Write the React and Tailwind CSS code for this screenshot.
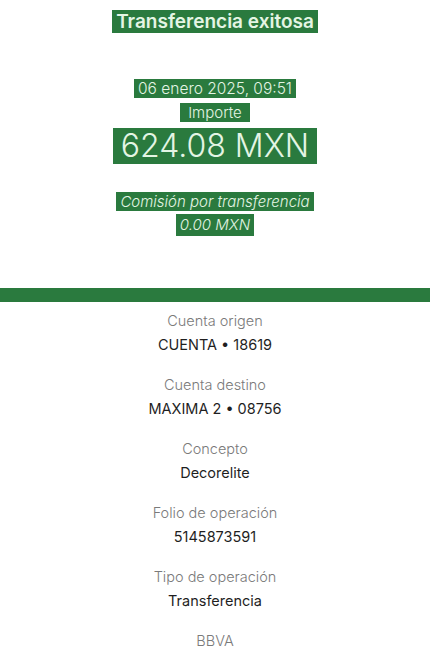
import React from "react";

const hl = "bg-[#2a7a3e] text-[#e4f5e4] px-1";

function Row({ label, value }) {
  return (
    <div className="flex flex-col items-center h-16">
      <div className="text-[14.5px] leading-6 font-light text-[#7a7a7a]">{label}</div>
      <div className="text-[14.5px] leading-6 text-[#1f1f1f]">{value}</div>
    </div>
  );
}

export default function App() {
  return (
    <div className="w-[430px] h-[661px] bg-white overflow-hidden" style={{ fontFamily: "Inter, 'Noto Sans', sans-serif" }}>
      <div className="flex flex-col items-center pt-[10px]">
        <div className={`${hl} text-[19px] leading-[23px] font-semibold`}>Transferencia exitosa</div>
        <div className={`${hl} mt-[46px] text-[15.5px] leading-[19px] font-light`}>06 enero 2025, 09:51</div>
        <div className={`${hl} mt-[5px] text-[15px] leading-[19px] font-light px-2`}>Importe</div>
        <div className={`${hl} mt-[6px] text-[32px] leading-[36px] font-light px-2`}>624.08 MXN</div>
        <div className={`${hl} mt-[28px] text-[15px] leading-[19px] font-light italic`}>Comisión por transferencia</div>
        <div className={`${hl} mt-[3px] text-[15px] leading-[22px] font-light italic`}>0.00 MXN</div>
      </div>
      <div className="mt-[52px] h-[14px] bg-[#2a7a3e]" />
      <div className="flex flex-col pt-[7px]">
        <Row label="Cuenta origen" value="CUENTA • 18619" />
        <Row label="Cuenta destino" value="MAXIMA 2 • 08756" />
        <Row label="Concepto" value="Decorelite" />
        <Row label="Folio de operación" value="5145873591" />
        <Row label="Tipo de operación" value="Transferencia" />
        <div className="flex flex-col items-center">
          <div className="text-[14.5px] leading-6 font-light text-[#7a7a7a]">BBVA</div>
        </div>
      </div>
    </div>
  );
}
